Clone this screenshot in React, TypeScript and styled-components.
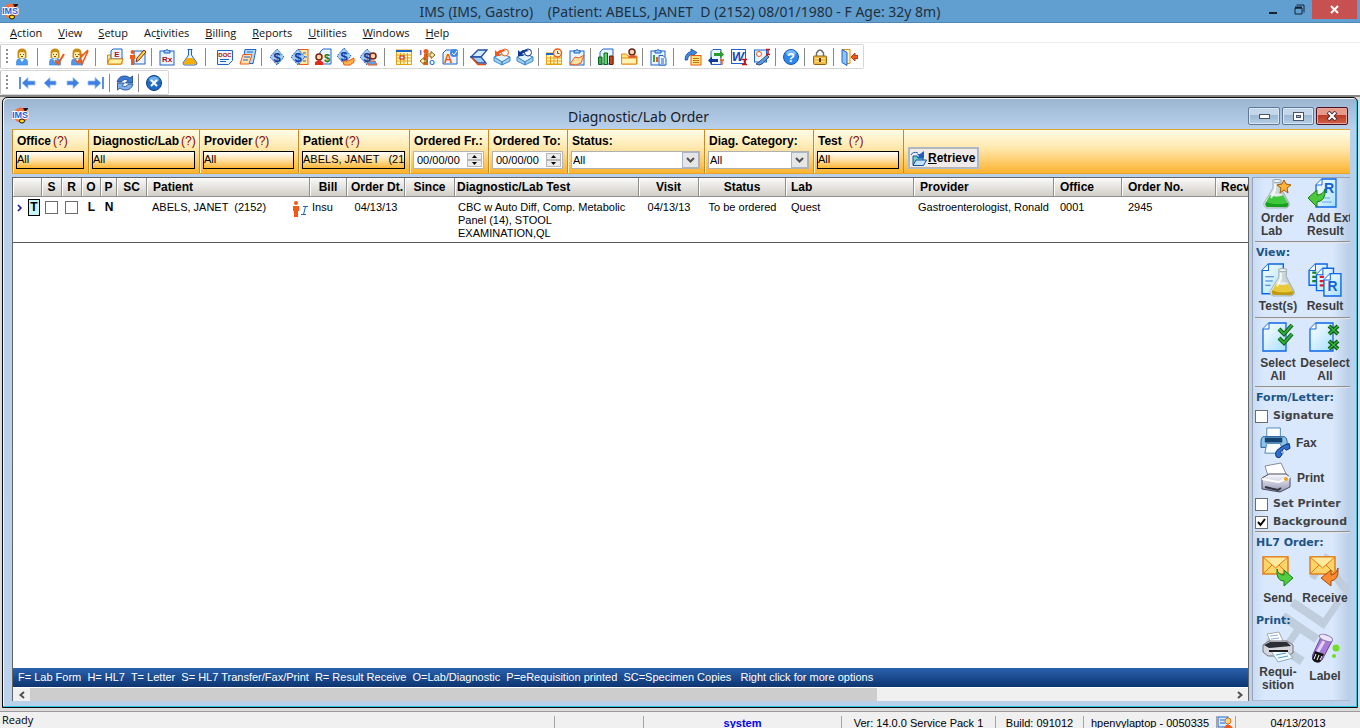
import React from "react";
import styled, { createGlobalStyle } from "styled-components";

const Global = createGlobalStyle`
  *, *::before, *::after { box-sizing: border-box; }
  html, body { margin: 0; height: 100%; }
  #root { height: 100%; }
  body { font-family: "Liberation Sans", Arial, sans-serif; font-size: 11px; color: #000; background: #fff; overflow: hidden; }
  button, input, select { font: inherit; color: inherit; margin: 0; padding: 0; border: 0; border-radius: 0; background: none; }
  svg { display: block; flex: none; }
`;

const uiFont = `"Open Sans", "Segoe UI", sans-serif`;
const titleFont = `"Noto Sans", "Segoe UI", sans-serif`;

/* ---------- application shell ---------- */

const Shell = styled.div`
  display: flex;
  flex-direction: column;
  height: 100vh;
`;

const TitleBar = styled.header`
  display: grid;
  grid-template-columns: 1fr auto 1fr;
  height: 23px;
  background: #629fd1;
  border-bottom: 1px solid #4d88b8;
  flex: none;
`;

const TitleLogo = styled.div`
  padding: 3px 2px;
`;

const AppTitle = styled.h1`
  margin: 0;
  font: 400 14px/23px ${titleFont};
  color: #1f2f3c;
  white-space: pre;
`;

const CaptionButtons = styled.div`
  display: flex;
  justify-content: flex-end;
  padding-right: 3px;
`;

const CaptionButton = styled.button<{ $close?: boolean }>`
  display: flex;
  align-items: center;
  justify-content: center;
  width: ${(p) => (p.$close ? 45 : 26)}px;
  height: 19px;
  background: ${(p) => (p.$close ? "#c75050" : "transparent")};
`;

const MenuBar = styled.nav`
  display: flex;
  gap: 16px;
  height: 20px;
  padding-left: 10px;
  border-bottom: 1px solid #ededed;
  flex: none;
`;

const MenuLink = styled.a`
  font: 400 11px/19px ${uiFont};
  color: #111;
  text-decoration: none;
`;

const ToolBar = styled.div`
  display: flex;
  align-items: center;
  align-self: flex-start;
  height: 25px;
  margin-top: 1px;
  padding: 0 3px 0 5px;
  border: 1px solid #d6d6d6;
  border-left-color: #c0c0c0;
  border-radius: 2px;
  flex: none;
`;

const Grip = styled.span<{ $gap: number }>`
  width: 2px;
  height: 16px;
  margin-right: ${(p) => p.$gap}px;
  background: repeating-linear-gradient(#8c8c8c 0 2px, transparent 2px 4px);
`;

const ToolButton = styled.button`
  display: flex;
  align-items: center;
  justify-content: center;
  width: 23px;
  height: 22px;
`;

const ToolSep = styled.span<{ $wide?: boolean }>`
  width: 1px;
  height: 18px;
  margin: 0 ${(p) => (p.$wide ? "7px 0 4px" : "3px 0 2px")};
  background: #8a8a8a;
`;

const Mdi = styled.main`
  display: flex;
  flex: 1;
  min-height: 0;
  padding: 0 2px 3px;
  background: #dcdcdc;
  border-top: 2px solid #868686;
`;

const ChildWindow = styled.section`
  display: flex;
  flex-direction: column;
  flex: 1;
  min-width: 0;
  padding: 0 7px 6px 9px;
  border: 1px solid #0a0a0a;
  border-radius: 5px 5px 0 0;
  background: linear-gradient(#9ab4d0 0, #b8d0ea 30px, #b9d1eb 100%);
  box-shadow: inset -1px -1px 0 #2cc6e4, inset 1px 1px 0 #f4f8fc;
`;

const WindowHead = styled.div`
  display: flex;
  justify-content: space-between;
  height: 31px;
  flex: none;
`;

const WindowLogo = styled.div`
  padding-top: 9px;
`;

const WindowTitle = styled.h2`
  flex: 1;
  margin: 0;
  padding-top: 8px;
  text-align: center;
  font: 400 14px/22px ${titleFont};
  color: #16202b;
`;

const WindowButtons = styled.div`
  display: flex;
  gap: 2px;
  padding: 9px 2px 0 0;
`;

const WindowButton = styled.button<{ $close?: boolean }>`
  display: flex;
  align-items: center;
  justify-content: center;
  width: 32px;
  height: 18px;
  border: 1px solid ${(p) => (p.$close ? "#4d1020" : "#5f7896")};
  border-radius: 2px;
  box-shadow: inset 0 0 0 1px ${(p) => (p.$close ? "#e6a89c" : "#dae7f5")};
  background: ${(p) =>
    p.$close
      ? "linear-gradient(#e59a8c 0 45%, #bd3a24 45%, #cf5f48)"
      : "linear-gradient(#c3d6ea 0 45%, #9db7d2 45%, #b7cfe7)"};
`;

/* ---------- filter strip ---------- */

const Filters = styled.form`
  display: flex;
  height: 45px;
  flex: none;
  border-top: 1px solid #e0a030;
  border-bottom: 1px solid #e8a52c;
  background: linear-gradient(#fffde8 0, #ffe6a8 45%, #fcb32e 100%);
`;

const FilterCell = styled.div<{ $w: number }>`
  width: ${(p) => p.$w}px;
  padding: 4px 4px 0 3px;
  border-left: 1px solid #c58a2a;
  box-shadow: inset 1px 0 0 #fff3d0;
  flex: none;
`;

const FilterEnd = styled.div`
  flex: 1;
  padding: 17px 0 0 4px;
  border-left: 1px solid #c58a2a;
`;

const FilterLabel = styled.div<{ $gap?: number }>`
  display: flex;
  gap: ${(p) => p.$gap ?? 2}px;
  padding-left: 1px;
  height: 17px;
  font-size: 12px;
  line-height: 15px;
  font-weight: 700;
  white-space: nowrap;
`;

const HelpLink = styled.a`
  font-weight: 400;
  color: #7e0a0a;
  text-decoration: none;
`;

const PlainField = styled.input`
  display: block;
  width: 100%;
  height: 18px;
  padding: 0 0 2px 0;
  border: 1px solid #000;
  background: linear-gradient(#ffffff 0, #ffe0a4 50%, #fdb738 100%);
`;

const DateBox = styled.div`
  display: flex;
  height: 18px;
  padding: 1px;
  border: 1px solid #b5b5b5;
  background: #fff;
`;

const DateInput = styled.input`
  flex: 1;
  min-width: 0;
  padding: 0 0 1px 2px;
`;

const Spinner = styled.div`
  display: flex;
  flex-direction: column;
  width: 15px;
`;

const SpinButton = styled.button`
  display: flex;
  flex: 1;
  align-items: center;
  justify-content: center;
  background: #ececec;
  border: 1px solid #b8b8b8;
`;

const SelectBox = styled.div`
  position: relative;
  height: 18px;
`;

const Select = styled.select`
  appearance: none;
  width: 100%;
  height: 18px;
  padding: 0 20px 1px 1px;
  border: 1px solid #b0b0b0;
  background: #fff;
`;

const SelectArrow = styled.span`
  position: absolute;
  right: 1px;
  top: 1px;
  display: flex;
  align-items: center;
  justify-content: center;
  width: 17px;
  height: 16px;
  border: 1px solid #a8b6c8;
  background: #e6e6e6;
  pointer-events: none;
`;

const RetrieveButton = styled.button`
  display: flex;
  align-items: center;
  gap: 1px;
  height: 22px;
  padding: 0 3px 0 1px;
  border: 1px solid #a8bccb;
  box-shadow: inset 0 0 0 1px #b9b4b2;
  background: #efebea;
  font-size: 12px;
  font-weight: 700;
`;

/* ---------- grid ---------- */

const Body = styled.div`
  display: flex;
  gap: 3px;
  flex: 1;
  min-height: 0;
  padding-top: 3px;
`;

const GridPane = styled.div`
  display: flex;
  flex-direction: column;
  flex: 1;
  min-width: 0;
  border: 1px solid #646464;
  border-bottom: 0;
  background: #fff;
`;

const GridScroll = styled.div`
  flex: 1;
  min-height: 0;
  overflow: hidden;
`;

const Grid = styled.table`
  width: 1280px;
  table-layout: fixed;
  border-collapse: separate;
  border-spacing: 0;
`;

const Th = styled.th<{ $left?: number }>`
  height: 19px;
  padding: 1px 0 0 ${(p) => p.$left ?? 0}px;
  text-align: ${(p) => (p.$left === undefined ? "center" : "left")};
  font-size: 12px;
  line-height: 17px;
  font-weight: 700;
  white-space: nowrap;
  background: linear-gradient(#fafaf9 0, #e6e4e0 50%, #d2cec7 100%);
  border-right: 1px solid #8e8e8e;
  border-bottom: 1px solid #8e8e8e;
  box-shadow: inset 1px 1px 0 #fff;
`;

const Td = styled.td<{ $left?: number; $bold?: boolean }>`
  height: 46px;
  padding: 4px 0 0 ${(p) => p.$left ?? 0}px;
  vertical-align: top;
  text-align: ${(p) => (p.$left === undefined ? "center" : "left")};
  line-height: 13px;
  font-size: ${(p) => (p.$bold ? 12 : 11)}px;
  font-weight: ${(p) => (p.$bold ? 700 : 400)};
  white-space: pre;
  border-bottom: 1px solid #5a5a5a;
`;

const RowMark = styled.div`
  display: flex;
  align-items: center;
  gap: 6px;
  margin-top: -2px;
`;

const TypeTag = styled.span`
  width: 12px;
  height: 17px;
  border: 1px solid #000;
  background: #c6f6f8;
  line-height: 15px;
  text-align: center;
`;

const PatientCell = styled.div`
  display: flex;
  justify-content: space-between;
  padding-right: 2px;
  height: 15px;
`;

const Check = styled.input`
  appearance: none;
  display: block;
  width: 13px;
  height: 13px;
  border: 1px solid #6c6c6c;
  background: #fff;
  flex: none;
`;

const GridCheck = styled(Check)`
  margin: 0 auto 0 3px;
`;

const Legend = styled.div`
  height: 19px;
  padding-left: 5px;
  background: linear-gradient(#2b62ad, #0c3470);
  color: #fff;
  line-height: 19px;
  white-space: pre;
  flex: none;
`;

const ScrollBar = styled.div`
  display: flex;
  height: 14px;
  border-top: 1px solid #fff;
  background: #f0f0f0;
  flex: none;
`;

const ScrollButton = styled.button`
  display: flex;
  align-items: center;
  justify-content: center;
  width: 17px;
`;

const ScrollTrack = styled.div`
  flex: 1;
`;

const ScrollThumb = styled.div`
  width: 70.5%;
  height: 100%;
  background: #cdcdcd;
`;

/* ---------- side panel ---------- */

const Side = styled.aside`
  position: relative;
  width: 98px;
  flex: none;
  overflow: hidden;
  padding-left: 2px;
  border-left: 1px solid #98a2b2;
  border-top: 1px solid #98a2b2;
  border-bottom: 1px solid #b0bccd;
  background: linear-gradient(90deg, #c9dcf3 0, #d9e8fc 12%, #d9e8fc 82%, #b9cde6 100%);
`;

const Watermark = styled.div`
  position: absolute;
  left: 3px;
  bottom: 60px;
  font-size: 60px;
  line-height: 60px;
  font-weight: 700;
  color: #c0cddd;
  transform: rotate(-56deg);
`;

const SideGroup = styled.div<{ $h: number; $line?: boolean }>`
  position: relative;
  height: ${(p) => p.$h}px;
  border-bottom: ${(p) => (p.$line ? "2px groove #e4e4e4" : "0")};
`;

const SideTitle = styled.h3`
  margin: 0;
  padding-left: 1px;
  font: 700 11px/19px "DejaVu Sans", Verdana, sans-serif;
  color: #1c5488;
  white-space: nowrap;
`;

const SidePair = styled.div`
  display: grid;
  grid-template-columns: 46px 48px;
`;

const SideButton = styled.button<{ $align?: "left" }>`
  display: flex;
  flex-direction: column;
  align-items: ${(p) => (p.$align ? "flex-start" : "center")};
  padding-left: ${(p) => (p.$align ? 6 : 0)}px;
  font-size: 12px;
  font-weight: 700;
  line-height: 13px;
  color: #3c3c3c;
  white-space: pre;
  text-align: ${(p) => p.$align ?? "center"};
  gap: 2px;
`;

const SideRowButton = styled.button`
  display: flex;
  align-items: center;
  gap: 5px;
  height: 35px;
  padding-left: 5px;
  font-size: 12px;
  font-weight: 700;
  color: #3c3c3c;
`;

const SideCheck = styled.label`
  display: flex;
  align-items: center;
  gap: 5px;
  height: 18px;
  font: 700 11px/18px "DejaVu Sans", Verdana, sans-serif;
  color: #444;
  white-space: nowrap;
`;

const CheckHolder = styled.span`
  position: relative;
  flex: none;
`;

const CheckMark = styled.svg`
  position: absolute;
  left: 2px;
  top: 2px;
  pointer-events: none;
`;

/* ---------- status bar ---------- */

const StatusBar = styled.footer`
  display: flex;
  height: 17px;
  overflow: hidden;
  flex: none;
  border-top: 1px solid #9a9a9a;
  background: #f0f0f0;
`;

const StatusCell = styled.div<{ $w?: number; $first?: boolean; $strong?: boolean }>`
  ${(p) => (p.$w ? `width: ${p.$w}px; flex: none;` : "flex: 1;")}
  margin-top: ${(p) => (p.$first ? 0 : 4)}px;
  padding-left: ${(p) => (p.$first ? 2 : 0)}px;
  border-left: ${(p) => (p.$first ? "0" : "1px solid #a5a5a5")};
  font: ${(p) => (p.$first ? `400 11px/16px ${uiFont}` : `${p.$strong ? 700 : 400} 11px/14px "Liberation Sans", Arial, sans-serif`)};
  color: ${(p) => (p.$strong ? "#0000f0" : "#000")};
  text-decoration: ${(p) => (p.$strong ? "underline" : "none")};
  text-align: ${(p) => (p.$first ? "left" : "center")};
  white-space: nowrap;
`;

/* ---------- drawings ---------- */

const B = "#1f62c8";
const O = "#f05a14";

const Dollar = ({ x = 9, y = 9 }: { x?: number; y?: number }) => (
  <g>
    <path d={`M${x} ${y - 8}l7 8-7 8-7-8z`} fill="#a4cdf6" stroke={B} strokeDasharray="2 1" />
    <text x={x} y={y + 5} fontSize="13" fontWeight="700" textAnchor="middle" fill="#103c9c">$</text>
  </g>
);

const Head = ({ x = 9, y = 1 }: { x?: number; y?: number }) => (
  <g>
    <path d={`M${x - 5.500} ${y + 16}v-3q0-3 3-3.500h5q3 .5 3 3.500v3z`} fill="#4b9af0" stroke="#3b82d8" strokeWidth=".6" />
    <path d={`M${x - 4.500} ${y + 9}V${y + 4}q0-4.500 4.500-4.500t4.500 4.500v5z`} fill="#c98d14" />
    <rect x={x - 3} y={y + 3} width="6" height="6.500" rx="2" fill="#fdeaa6" />
    <path d={`M${x - 2} ${y + 5.500}h1M${x + 1} ${y + 5.500}h1M${x - 1} ${y + 7.500}h2`} stroke="#7a4a10" />
    <path d={`M${x - 2} ${y + 10}h4l-2 3z`} fill="#fff" />
  </g>
);

const Page = ({ x = 3, y = 1, w = 12, h = 15 }: { x?: number; y?: number; w?: number; h?: number }) => (
  <path d={`M${x + 3} ${y}h${w - 3}v${h}h${-w}v${-(h - 3)}z`} fill="#e9f4ff" stroke={B} />
);

const Clip = () => (
  <g>
    <rect x="2" y="3" width="14" height="14" fill="#e9f4ff" stroke={B} />
    <path d="M6 5V2.500h1.500q1.500-2 3 0H12V5z" fill="#9cc8f4" stroke={B} />
  </g>
);

const Folder = () => (
  <g>
    <path d="M1.500 16V7h5l1.500 2h8v7z" fill="#ffe27a" stroke="#e08a10" />
    <path d="M3.500 11H17l-2 5H1.500z" fill="#fff1a8" stroke="#e08a10" />
  </g>
);

const CalGrid = ({ y = 2 }: { y?: number }) => (
  <g>
    <rect x="1.500" y={y} width="15" height={16.500 - y} fill="#fff8c8" stroke="#e8a010" />
    <path d={`M1 ${y + 1}h16`} stroke={B} strokeWidth="2" />
    <path d={`M5.500 ${y + 3}V16M9 ${y + 3}V16M12.500 ${y + 3}V16M2 ${y + 5}h14M2 ${y + 8}h14M2 ${y + 11}h14`} stroke="#e8a010" />
  </g>
);

const Disk = ({ c }: { c: string }) => (
  <g>
    <path d="M1 9l8-3 8 3-8 5z" fill="#e2f2ff" stroke="#3f88c8" />
    <path d="M1 9v4l8 4v-3zM17 9v4l-8 4v-3z" fill="#9fd0f2" stroke="#3f88c8" />
    <circle cx="12" cy="4.500" r="3.500" fill="#fff" stroke={c} />
    <path d="M2 2v6h6L6 6q3-3 7-3Q8 0 4 4z" fill={c} />
  </g>
);

const icons: Record<string, React.ReactNode> = {
  person: <Head />,
  personCheck: (<g><Head x={7} /><path d="M7 12l3 4 6-10" fill="none" stroke={O} strokeWidth="2" /></g>),
  personChecks: (<g><Head x={6} /><path d="M4 11l3 4 5-9M9 12l2 4 6-13M8 6l3 2 6-6" fill="none" stroke={O} strokeWidth="1.600" /></g>),
  folderE: (<g><Folder /><path d="M7 1h9v10H5V3z" fill="#e9f4ff" stroke={B} /><text x="11" y="9" fontSize="8" fontWeight="700" textAnchor="middle" fill="#b01010">E</text><path d="M3.500 11H17l-2 5H1.500z" fill="#fff1a8" stroke="#e08a10" /></g>),
  note: (<g><rect x="5" y="3" width="11" height="13" fill="#e9f4ff" stroke={B} /><circle cx="3.500" cy="4" r="2" fill={O} /><path d="M1 7h5v4H5v6H2v-6H1z" fill={O} /><path d="M7 14l1-4 7-8 2 2-7 8z" fill="#ffd044" stroke="#8a2a08" /></g>),
  rx: (<g><Clip /><text x="9" y="14" fontSize="8" fontWeight="700" textAnchor="middle" fill="#a01020">Rx</text></g>),
  flask: (<g><path d="M6.500 1.500h5M7.500 2v5l-5.500 8q0 2 2 2h10q2 0 2-2L10.500 7V2" fill="#dff0ff" stroke={B} /><path d="M6 10h6l3.500 5q0 1.500-2 1.500h-9q-2 0-2-1.500z" fill="#f5ad08" /></g>),
  doc: (<g><path d="M1.500 2.500h15v10l-4 4h-11z" fill="#e9f4ff" stroke={B} /><text x="9" y="9" fontSize="6" fontWeight="700" textAnchor="middle" fill="#b01010">DOC</text><path d="M4 11.500h9M4 13.500h6" stroke={B} /></g>),
  pages: (<g><path d="M6 1.500h11l-3 14H4z" fill="#b8dcff" stroke={B} /><path d="M4 6.500h9L10 16H1z" fill="#ffe2b0" stroke={O} /><path d="M8 4h6M5 9h6M4 12h5" stroke={B} /></g>),
  dollar: <Dollar />,
  dollarPage: (<g><rect x="8" y="1.500" width="9" height="15" fill="#ffe6a0" stroke={O} /><path d="M12 5h3M13 9h3M12 13h3" stroke={B} /><Dollar x={7} /></g>),
  dollarPerson: (<g><Page x={6} y={1} w={11} h={15} /><text x="13" y="14" fontSize="11" fontWeight="700" textAnchor="middle" fill="#167a2a">$</text><circle cx="5" cy="9" r="3" fill="#fbd5ae" stroke="#7a2410" strokeWidth="1.500" /><path d="M1 17v-3l4-2 4 2v3z" fill="#e42a1a" /></g>),
  dollarHand: (<g><Dollar x={7} y={8} /><path d="M6 13h5l2-1 4-2v4l-4 3H7z" fill="#ffb24a" stroke={O} /></g>),
  dollarMan: (<g><Dollar x={7} /><circle cx="13" cy="8" r="3" fill="#fbd5ae" stroke="#7a2410" strokeWidth="1.500" /><path d="M8 17l2-4h5l2 4z" fill="#5aa0f0" stroke={O} /></g>),
  calendar: (<g><CalGrid /><rect x="5" y="8" width="4" height="3" fill="#fff" stroke="#c01010" /></g>),
  io: (<g><circle cx="8" cy="3.500" r="2.500" fill={O} /><path d="M6 6h4v11H6z" fill={O} /><path d="M9 6h4V3.500L17 7l-4 3.500V8H9zM9 12H6V9.500L2 13l4 3.500V14h3z" fill="#fff3b0" stroke="#8a5a10" /><text x="2.500" y="7" fontSize="8" fontWeight="700" textAnchor="middle" fill={B}>I</text><text x="14" y="17" fontSize="7" fontWeight="700" textAnchor="middle" fill={B}>O</text></g>),
  pageA: (<g><Page x={2} y={2} w={14} h={14} /><text x="7" y="15" fontSize="12" fontWeight="700" textAnchor="middle" fill={O}>A</text><circle cx="13" cy="5" r="4" fill="#3f88e8" /><path d="M11 5l2 2 3-4" fill="none" stroke="#fff" /></g>),
  book: (<g><path d="M1 9l7-7h9l-6 7z" fill="#d4ebff" stroke="#2350a8" strokeWidth="1.300" /><path d="M1 9h10l5 6H8z" fill="#9fd0fa" stroke="#2350a8" strokeWidth="1.300" /><path d="M2 10l6 6.500h8" fill="none" stroke="#e84a10" strokeWidth="1.500" /></g>),
  diskRed: <Disk c={O} />,
  diskBlue: <Disk c="#0e3796" />,
  calClock: (<g><CalGrid y={5} /><circle cx="12.500" cy="5" r="4" fill="#fff2d0" stroke={O} strokeWidth="1.500" /><path d="M12.500 3v2.500h2" fill="none" stroke="#555" /></g>),
  clipHand: (<g><Clip /><path d="M2 16l5-7 4 1 5-3-3 8-5 2z" fill="#ffe0a0" stroke={O} /></g>),
  chart: (<g><Page x={3} y={1} w={13} h={15} /><path d="M1.500 9h3.500v7.500H1.500z" fill="#38b048" stroke="#126020" /><path d="M7 5h3.500v11.500H7z" fill="#58d868" stroke="#126020" /><path d="M12.500 8H16v8.500h-3.500z" fill="#c04a18" stroke="#701808" /></g>),
  folderMan: (<g><path d="M1.500 16V6h5l1.500 2h9v8z" fill="#ffe27a" stroke="#e08a10" /><circle cx="12" cy="4" r="3" fill="#fbd5ae" stroke="#60281a" strokeWidth="1.500" /><path d="M8 12V9l3-2h3l3 2v3z" fill="#e0553a" /><path d="M1.500 10h15v6h-15z" fill="#fff3b4" stroke="#e08a10" /></g>),
  clipChart: (<g><Clip /><path d="M4 7h2v7H4z" fill="#38a048" /><path d="M7 9h2v5H7z" fill={O} /><path d="M10 7.500h4l3 3v6.500h-7z" fill="#e9f4ff" stroke={B} /><path d="M12 11h3M12 13h3M12 15h3" stroke={B} /></g>),
  phoneNote: (<g><path d="M1 12q0-7 6-8.500V1l6 3.500-5 4V6.500Q4 7 3.500 12z" fill="#3f88e0" stroke="#1848a0" strokeWidth=".8" /><rect x="7" y="7.500" width="10" height="9.500" fill="#ffe27a" stroke={O} /><path d="M9 10.500h6M9 12.500h6M9 14.500h6" stroke="#c07010" /></g>),
  transfer: (<g><path d="M6 1.500h8v15H4v-13z" fill="#e9f4ff" stroke={B} /><path d="M7 5h6V2.500l4 4-4 4V8H7z" fill="#2b9a30" /><path d="M11 11H5V8.500l-4 4 4 4V14h6z" fill="#123a9a" /><path d="M13 12h4M15 12v5" stroke={O} strokeWidth="1.500" /></g>),
  word: (<g><rect x="1.500" y="1.500" width="14" height="14" fill="#fff" stroke={B} /><text x="8" y="13" fontSize="13" fontWeight="700" fontStyle="italic" textAnchor="middle" fill="#1448b8">W</text><path d="M12 11.500h5M14.500 11v6M12 16.500h5" stroke="#c01818" strokeWidth="1.500" /></g>),
  paint: (<g><rect x="1.500" y="2" width="12" height="12" fill="#e9f4ff" stroke={B} /><circle cx="6" cy="6" r="2.500" fill="#fff" stroke={O} /><path d="M6 14l8-7 2 2-7 7q-3 2-6 0z" fill="#5a9ae0" stroke="#38507a" /><path d="M13 1.500h4M15 1v6M13 6.500h4" stroke="#c01818" strokeWidth="1.500" /></g>),
  help: (<g><circle cx="9" cy="9" r="7.500" fill="#2f86ee" stroke="#1658b4" /><ellipse cx="9" cy="5" rx="5" ry="3" fill="#79b8fa" /><text x="9" y="13.500" fontSize="13" fontWeight="700" textAnchor="middle" fill="#fff">?</text></g>),
  lock: (<g><path d="M5.500 8V5q3.500-6 7 0v3" fill="none" stroke="#6f6f6f" strokeWidth="1.500" /><rect x="2.500" y="8" width="13" height="8.500" rx="1" fill="#eebb4c" stroke="#94640c" /><path d="M4 10.500h10M4 13.500h10" stroke="#ffe08a" /><path d="M9 10v4" stroke="#5a3a08" strokeWidth="2" /></g>),
  exit: (<g><path d="M2 1.500h8v14H7" fill="#fff3c0" stroke="#e08a10" /><path d="M2 1.500l5 3v13l-5-3z" fill="#8fc4f8" stroke={B} /><path d="M18 7.500h-3V5l-4 4 4 4v-2.500h3z" fill={O} stroke="#9a2410" strokeWidth=".8" /></g>),
  first: (<g><path d="M2 3v12" stroke="#2a68d8" strokeWidth="1.500" /><path d="M4 9l6-5.500v3.500h7v4h-7v3.500z" fill="#3f7fe4" stroke="#9cc2f6" strokeWidth=".8" /></g>),
  prev: <path d="M3 9l6-5.500v3.500h6v4H9v3.500z" fill="#3f7fe4" stroke="#9cc2f6" strokeWidth=".8" />,
  next: <path d="M15 9L9 3.500v3.500H3v4h6v3.500z" fill="#3f7fe4" stroke="#9cc2f6" strokeWidth=".8" />,
  last: (<g><path d="M16 3v12" stroke="#2a68d8" strokeWidth="1.500" /><path d="M14 9L8 3.500v3.500H1v4h7v3.500z" fill="#3f7fe4" stroke="#9cc2f6" strokeWidth=".8" /></g>),
  refresh: (<g><path d="M1 8Q3 1.500 9 2q3 0 5 2l2.500-2v7H9.500L12 6.500Q8 4 5.500 8z" fill="#3a7ad4" stroke="#123f8c" strokeWidth=".8" /><path d="M17 10q-2 6.500-8 6-3 0-5-2l-2.500 2V9h7L6 11.500q4 2.500 6.500-1.500z" fill="#7db2ec" stroke="#123f8c" strokeWidth=".8" /></g>),
  stop: (<g><circle cx="9" cy="9" r="7.500" fill="#1f6cc4" stroke="#103f80" /><ellipse cx="9" cy="5.500" rx="5" ry="3" fill="#6db0ee" /><path d="M6 6l6 6M12 6l-6 6" stroke="#fff" strokeWidth="2" /></g>),
};

const ToolIcon = ({ name }: { name: string }) => (
  <svg width="18" height="18" viewBox="0 0 18 18" fontFamily="Liberation Sans, sans-serif">{icons[name]}</svg>
);

const Logo = () => (
  <svg width="17" height="17" viewBox="0 0 17 17" fontFamily="Liberation Sans, sans-serif">
    <circle cx="9" cy="8" r="7.500" fill="#f0703e" />
    <path d="M11 1h5v1l-3 3z" fill="#28140c" />
    <text x="8" y="11" fontSize="9" fontWeight="700" textAnchor="middle" fill="#1b5fe0" stroke="#fff" strokeWidth="2" paintOrder="stroke">IMS</text>
    <ellipse cx="10" cy="14" rx="2.500" ry="2" fill="#ffe21c" stroke="#1c1408" />
  </svg>
);

const SideSvg = ({ children, w = 32, h = 32 }: { children: React.ReactNode; w?: number; h?: number }) => (
  <svg width={w} height={h} viewBox="0 0 32 32" fontFamily="Liberation Sans, sans-serif">
    <defs>
      <linearGradient id="paper" x1="0" y1="0" x2="1" y2="1"><stop offset="0" stopColor="#fff" /><stop offset="1" stopColor="#a5e0fc" /></linearGradient>
      <linearGradient id="glass" x1="0" y1="0" x2="1" y2="0"><stop offset="0" stopColor="#f4f8f8" /><stop offset="1" stopColor="#a9bcc0" /></linearGradient>
      <linearGradient id="steel" x1="0" y1="0" x2="0" y2="1"><stop offset="0" stopColor="#fcfcff" /><stop offset="1" stopColor="#9296b4" /></linearGradient>
    </defs>
    {children}
  </svg>
);

const BluePage = ({ x, y, w, h }: { x: number; y: number; w: number; h: number }) => (
  <g>
    <path d={`M${x + 6} ${y}h${w - 6}v${h}h${-w}v${-(h - 6)}z`} fill="url(#paper)" stroke="#0e66e4" strokeWidth="1.300" />
    <path d={`M${x + 6} ${y}v6h-6`} fill="#fff" stroke="#0e66e4" />
  </g>
);

const BigFlask = ({ liquid, dark }: { liquid: string; dark: string }) => (
  <g>
    <path d="M12 2h8v8l8 15q1 4-3 5H6q-4-1-3-5l9-15z" fill="url(#glass)" stroke="#a0b0b4" />
    <path d="M9 17q7 3 13 0l5 9q0 3-3 3H7q-3 0-3-3z" fill={liquid} />
    <path d="M5 24q10 4 22 1 1 4-3 4H7q-3 0-2-5z" fill={dark} />
    <ellipse cx="16" cy="17" rx="6" ry="1.500" fill="#fff" opacity=".5" />
    <ellipse cx="16" cy="3" rx="4.500" ry="1.500" fill="#f8fbfb" stroke="#98a6aa" />
    <path d="M14 6v6l-4 8" stroke="#fff" strokeWidth="2" fill="none" opacity=".8" />
  </g>
);

const Ticks = () => (
  <g fill="none">
    <path d="M17 8l5 5 8-9M17 17l5 5 8-9" stroke="#0c5c14" strokeWidth="4" />
    <path d="M17 8l5 5 8-9M17 17l5 5 8-9" stroke="#2fae38" strokeWidth="2" />
  </g>
);
const Cross = ({ y }: { y: number }) => (
  <g>
    <path d={`M20 ${y}l9 8M29 ${y}l-9 8`} stroke="#0c5c14" strokeWidth="4" />
    <path d={`M20 ${y}l9 8M29 ${y}l-9 8`} stroke="#37b440" strokeWidth="1.600" />
  </g>
);

const Envelope = () => (
  <g>
    <rect x="1" y="2" width="25" height="17" fill="#fdd56a" stroke="#e27a10" strokeWidth="1.400" />
    <path d="M1 19l9-9M26 19l-9-9" stroke="#e27a10" />
    <path d="M1 2l12.500 11L26 2z" fill="#ffe99c" stroke="#e27a10" />
  </g>
);

/* ---------- content ---------- */

const menus: [string, string, string][] = [
  ["", "A", "ction"], ["", "V", "iew"], ["", "S", "etup"], ["Ac", "t", "ivities"], ["", "B", "illing"],
  ["", "R", "eports"], ["", "U", "tilities"], ["", "W", "indows"], ["", "H", "elp"],
];

const mainTools = [
  "person", "||", "personCheck", "personChecks", "||", "folderE", "note", "|", "rx", "flask", "||", "doc", "pages", "|",
  "dollar", "dollarPage", "dollarPerson", "dollarHand", "dollarMan", "||", "calendar", "io", "pageA", "|",
  "book", "diskRed", "diskBlue", "|", "calClock", "clipHand", "|", "chart", "folderMan", "|", "clipChart", "||",
  "phoneNote", "transfer", "word", "paint", "|", "help", "|", "lock", "|", "exit",
];
const navTools = ["first", "prev", "next", "last", "|", "refresh", "|", "stop"];

const Tools = ({ items, gap }: { items: string[]; gap: number }) => (
  <ToolBar role="toolbar">
    <Grip $gap={gap} />
    {items.map((t, i) =>
      t[0] === "|" ? <ToolSep key={i} $wide={t === "||"} /> : (
        <ToolButton key={i} aria-label={t}><ToolIcon name={t} /></ToolButton>
      )
    )}
  </ToolBar>
);

const columns: { w: number; label: string; left?: number }[] = [
  { w: 29, label: "" }, { w: 20, label: "S" }, { w: 20, label: "R" }, { w: 19, label: "O" }, { w: 16, label: "P" },
  { w: 30, label: "SC" }, { w: 163, label: "Patient", left: 6 }, { w: 37, label: "Bill" }, { w: 58, label: "Order Dt.", left: 4 },
  { w: 50, label: "Since" }, { w: 184, label: "Diagnostic/Lab Test", left: 2 }, { w: 60, label: "Visit" },
  { w: 87, label: "Status" }, { w: 128, label: "Lab", left: 5 }, { w: 140, label: "Provider", left: 6 },
  { w: 68, label: "Office", left: 6 }, { w: 94, label: "Order No.", left: 6 }, { w: 77, label: "Recv", left: 5 },
];

const LookupFilter = ({ id, label, value, w, gap }: { id: string; label: string; value: string; w: number; gap?: number }) => (
  <FilterCell $w={w}>
    <FilterLabel $gap={gap}><label htmlFor={id}>{label}</label><HelpLink href="#">(?)</HelpLink></FilterLabel>
    <PlainField id={id} defaultValue={value} />
  </FilterCell>
);

const DateFilter = ({ id, label }: { id: string; label: string }) => (
  <FilterCell $w={79}>
    <FilterLabel as="label" htmlFor={id}>{label}</FilterLabel>
    <DateBox>
      <DateInput id={id} defaultValue="00/00/00" />
      <Spinner>
        <SpinButton type="button" aria-label="Up"><svg width="5" height="3"><path d="M0 3L2.500 0 5 3z" /></svg></SpinButton>
        <SpinButton type="button" aria-label="Down"><svg width="5" height="3"><path d="M0 0h5L2.500 3z" /></svg></SpinButton>
      </Spinner>
    </DateBox>
  </FilterCell>
);

const SelectFilter = ({ id, label, w }: { id: string; label: string; w: number }) => (
  <FilterCell $w={w}>
    <FilterLabel as="label" htmlFor={id}>{label}</FilterLabel>
    <SelectBox>
      <Select id={id}><option>All</option></Select>
      <SelectArrow><svg width="9" height="6"><path d="M1 1l3.500 3.500L8 1" fill="none" stroke="#505050" strokeWidth="2" /></svg></SelectArrow>
    </SelectBox>
  </FilterCell>
);

const SideCheckbox = ({ label, checked }: { label: string; checked?: boolean }) => (
  <SideCheck>
    <CheckHolder>
      <Check type="checkbox" defaultChecked={checked} />
      {checked && <CheckMark width="9" height="9"><path d="M1 4l2.500 3L8 1" fill="none" stroke="#000" strokeWidth="2" /></CheckMark>}
    </CheckHolder>
    {label}
  </SideCheck>
);

export default function App() {
  return (
    <Shell>
      <Global />
      <TitleBar>
        <TitleLogo><Logo /></TitleLogo>
        <AppTitle>{"IMS (IMS, Gastro)    (Patient: ABELS, JANET  D (2152) 08/01/1980 - F Age: 32y 8m)"}</AppTitle>
        <CaptionButtons>
          <CaptionButton aria-label="Minimize"><svg width="10" height="10"><path d="M1 8h8" stroke="#16222e" strokeWidth="2" /></svg></CaptionButton>
          <CaptionButton aria-label="Restore"><svg width="11" height="11"><path d="M2.500 1H10v7.500M1 4h7v6H1z" fill="none" stroke="#16222e" /><path d="M1 3.500h7" stroke="#16222e" strokeWidth="2" /></svg></CaptionButton>
          <CaptionButton $close aria-label="Close"><svg width="9" height="9"><path d="M1 1l7 7M8 1L1 8" stroke="#fff" strokeWidth="2" /></svg></CaptionButton>
        </CaptionButtons>
      </TitleBar>
      <MenuBar>
        {menus.map(([a, b, c]) => <MenuLink key={b + c} href="#">{a}<u>{b}</u>{c}</MenuLink>)}
      </MenuBar>
      <Tools items={mainTools} gap={2} />
      <Tools items={navTools} gap={7} />

      <Mdi>
        <ChildWindow>
          <WindowHead>
            <WindowLogo><Logo /></WindowLogo>
            <WindowTitle>Diagnostic/Lab Order</WindowTitle>
            <WindowButtons>
              <WindowButton aria-label="Minimize window"><svg width="11" height="5"><rect x=".5" y=".5" width="10" height="4" fill="#fff" stroke="#4a5568" /></svg></WindowButton>
              <WindowButton aria-label="Maximize window"><svg width="11" height="9"><rect x=".5" y=".5" width="10" height="8" fill="#fff" stroke="#4a5568" /><rect x="3.500" y="3.500" width="4" height="2" fill="#9db7d2" stroke="#4a5568" /></svg></WindowButton>
              <WindowButton $close aria-label="Close window"><svg width="12" height="10"><path d="M2 1l8 8M10 1L2 9" stroke="#4a3040" strokeWidth="4" /><path d="M2.500 1.500l7 7M9.500 1.500l-7 7" stroke="#fff" strokeWidth="2" /></svg></WindowButton>
            </WindowButtons>
          </WindowHead>

          <Filters onSubmit={(e) => e.preventDefault()}>
            <LookupFilter id="office" label="Office" value="All" w={76} />
            <LookupFilter id="diag" label="Diagnostic/Lab" value="All" w={111} />
            <LookupFilter id="provider" label="Provider" value="All" w={99} />
            <LookupFilter id="patient" label="Patient" value="ABELS, JANET   (2152)" w={111} />
            <DateFilter id="from" label="Ordered Fr.:" />
            <DateFilter id="to" label="Ordered To:" />
            <SelectFilter id="status" label="Status:" w={137} />
            <SelectFilter id="category" label="Diag. Category:" w={109} />
            <LookupFilter id="test" label="Test" value="All" w={90} gap={7} />
            <FilterEnd>
              <RetrieveButton>
                <svg width="17" height="18" viewBox="0 0 17 18"><path d="M3 16V7h4l1 2h5v7z" fill="#6fd0c8" stroke="#14509c" /><path d="M6 11h10.500l-3 5.500H3z" fill="#c4e2f8" stroke="#14509c" /><path d="M1 6q2-4 7-2" fill="none" stroke="#1c5fc0" /><path d="M14 2v7H7l2-2-2-2 3 0z" fill="#1c5fc0" /></svg>
                <span><u>R</u>etrieve</span>
              </RetrieveButton>
            </FilterEnd>
          </Filters>

          <Body>
            <GridPane>
              <GridScroll>
                <Grid>
                  <colgroup>{columns.map((c, i) => <col key={i} style={{ width: c.w }} />)}</colgroup>
                  <thead><tr>{columns.map((c, i) => <Th key={i} $left={c.left}>{c.label}</Th>)}</tr></thead>
                  <tbody>
                    <tr>
                      <Td $left={4} $bold><RowMark><svg width="5" height="8"><path d="M1 1l3 3-3 3" fill="none" stroke="#10108a" strokeWidth="1.500" /></svg><TypeTag>T</TypeTag></RowMark></Td>
                      <Td $left={0}><GridCheck type="checkbox" aria-label="S" /></Td>
                      <Td $left={0}><GridCheck type="checkbox" aria-label="R" /></Td>
                      <Td $bold>L</Td>
                      <Td $bold>N</Td>
                      <Td />
                      <Td $left={5}>
                        <PatientCell>
                          {"ABELS, JANET  (2152)"}
                          <svg width="16" height="16"><circle cx="4" cy="2" r="2" fill={O} /><path d="M1 5h6v5H6v6H2v-6H1z" fill={O} /><path d="M11 5.500h5M13.500 5.500l-2 8M9 13.500h5" stroke={B} fill="none" /></svg>
                        </PatientCell>
                      </Td>
                      <Td $left={2}>Insu</Td>
                      <Td>04/13/13</Td>
                      <Td />
                      <Td $left={3}>{"CBC w Auto Diff, Comp. Metabolic\nPanel (14), STOOL\nEXAMINATION,QL"}</Td>
                      <Td>04/13/13</Td>
                      <Td>To be ordered</Td>
                      <Td $left={5}>Quest</Td>
                      <Td $left={4}>Gastroenterologist, Ronald</Td>
                      <Td $left={6}>0001</Td>
                      <Td $left={6}>2945</Td>
                      <Td />
                    </tr>
                  </tbody>
                </Grid>
              </GridScroll>
              <Legend>{"F= Lab Form  H= HL7  T= Letter  S= HL7 Transfer/Fax/Print  R= Result Receive  O=Lab/Diagnostic  P=eRequisition printed  SC=Specimen Copies   Right click for more options"}</Legend>
              <ScrollBar>
                <ScrollButton aria-label="Scroll left"><svg width="6" height="8"><path d="M5 1L1.500 4 5 7" fill="none" stroke="#505050" strokeWidth="2" /></svg></ScrollButton>
                <ScrollTrack><ScrollThumb /></ScrollTrack>
                <ScrollButton aria-label="Scroll right"><svg width="6" height="8"><path d="M1 1l3.500 3L1 7" fill="none" stroke="#505050" strokeWidth="2" /></svg></ScrollButton>
              </ScrollBar>
            </GridPane>

            <Side>
              <Watermark aria-hidden>HL7</Watermark>
              <SideGroup $h={65} $line>
                <SidePair>
                  <SideButton $align="left">
                    <SideSvg><BigFlask liquid="#3fc83c" dark="#15a020" /><path d="M23 2l2 4 5 1-4 3 1 5-4-3-4 3 1-5-4-3 5-1z" fill="#ffb43a" stroke="#a85a08" /></SideSvg>
                    {"Order\nLab"}
                  </SideButton>
                  <SideButton $align="left">
                    <SideSvg><BluePage x={9} y={1} w={20} h={28} /><text x="22" y="15" fontSize="14" fontWeight="700" textAnchor="middle" fill="#1260d8">R</text><path d="M15 20h8M15 24h10" stroke="#68a8e8" /><path d="M1 20l9-8v5q6 0 8-6 1 12-8 13v5z" fill="#4cc83c" stroke="#187818" /></SideSvg>
                    {"Add Ext\nResult"}
                  </SideButton>
                </SidePair>
              </SideGroup>
              <SideGroup $h={76} $line>
                <SideTitle>View:</SideTitle>
                <SidePair>
                  <SideButton>
                    <SideSvg w={34} h={36}><BluePage x={1} y={1} w={20} h={28} /><path d="M4 13h8M4 17h7M4 21h5" stroke="#3078d8" /><g transform="translate(6 4) scale(.9)"><BigFlask liquid="#e8c93a" dark="#c09a10" /></g></SideSvg>
                    Test(s)
                  </SideButton>
                  <SideButton>
                    <SideSvg w={34} h={36}><BluePage x={1} y={1} w={17} h={20} /><path d="M4 9h4M4 13h4M4 17h4" stroke="#188028" strokeWidth="2" /><BluePage x={8} y={5} w={16} h={21} /><path d="M11 13h4M11 17h4M11 21h4" stroke="#e01830" strokeWidth="2" /><BluePage x={15} y={10} w={16} h={21} /><text x="23" y="26" fontSize="13" fontWeight="700" textAnchor="middle" fill="#1260d8">R</text></SideSvg>
                    Result
                  </SideButton>
                </SidePair>
              </SideGroup>
              <SideGroup $h={69} $line>
                <SidePair>
                  <SideButton>
                    <SideSvg h={36}><BluePage x={1} y={2} w={23} h={28} /><Ticks /></SideSvg>
                    {"Select\nAll"}
                  </SideButton>
                  <SideButton>
                    <SideSvg h={36}><BluePage x={1} y={2} w={23} h={28} /><Cross y={5} /><Cross y={20} /></SideSvg>
                    {"Deselect\nAll"}
                  </SideButton>
                </SidePair>
              </SideGroup>
              <SideGroup $h={145} $line>
                <SideTitle>Form/Letter:</SideTitle>
                <SideCheckbox label="Signature" />
                <SideRowButton>
                  <SideSvg w={31} h={31}><path d="M7 1h14v9H7z" fill="#fff" stroke="#4e86b8" /><path d="M3 10h22q3 1 3 5v6H1v-6q0-4 2-5z" fill="#8cc4ec" stroke="#225a94" /><path d="M5 11h18v5H5z" fill="#16426e" /><path d="M7 17h14l3 10H5z" fill="#f8fbff" stroke="#4e86b8" /><path d="M17 31q-3-5 3-9 5-4 10-5l1 5-4 2-2-2-4 4 2 2-3 4z" fill="#2f6cd0" stroke="#0c2c70" /></SideSvg>
                  Fax
                </SideRowButton>
                <SideRowButton>
                  <SideSvg><path d="M5 4l16-3 6 13H8z" fill="#fff" stroke="#8a8a9c" /><path d="M2 16l7-4h17l4 3v10l-10 5-18-3z" fill="url(#steel)" stroke="#484860" /><path d="M2 17l17 3 11-5" fill="none" stroke="#fff" strokeWidth="2" /><path d="M5 25l13 3 3-2" fill="none" stroke="#343440" strokeWidth="2" /><circle cx="26" cy="17" r="2" fill="#f0a020" /></SideSvg>
                  Print
                </SideRowButton>
                <SideCheckbox label="Set Printer" />
                <SideCheckbox label="Background" checked />
              </SideGroup>
              <SideGroup $h={78}>
                <SideTitle>HL7 Order:</SideTitle>
                <SidePair>
                  <SideButton>
                    <SideSvg h={38}><Envelope /><path d="M15 14q1 6 7 6v-5l9 8-9 8v-5q-8 0-7-12z" fill="#52cc40" stroke="#167c1c" /></SideSvg>
                    Send
                  </SideButton>
                  <SideButton>
                    <SideSvg h={38}><Envelope /><path d="M29 13q1 12-7 13v5l-10-8 10-8v5q5 0 7-7z" fill="#f78c32" stroke="#b04808" /></SideSvg>
                    Receive
                  </SideButton>
                </SidePair>
              </SideGroup>
              <SideGroup $h={84}>
                <SideTitle>Print:</SideTitle>
                <SidePair>
                  <SideButton>
                    <SideSvg h={34}><path d="M5 3l12-2 6 13H10z" fill="#fff" stroke="#a0aab8" /><path d="M8 5l8-1M9 8l8-1" stroke="#90b4d8" /><path d="M1 14l6-4h18l6 4v8l-6 3H6l-5-4z" fill="#d5d6dc" stroke="#70727c" /><path d="M2 14l6-3h17l4 4-22 2z" fill="#2c2e34" /><path d="M9 20h16l6 7-15 4z" fill="#f4faff" stroke="#90a8c0" /><path d="M14 24l10-2M16 27l10-2" stroke="#4898d8" /><path d="M7 20h19" stroke="#202024" strokeWidth="2" /></SideSvg>
                    {"Requi-\nsition"}
                  </SideButton>
                  <SideButton>
                    <SideSvg h={38}><path d="M12 4l11 4-10 19q-4 4-8 0-3-3-1-6z" fill="#a67cd8" stroke="#6c48a0" /><path d="M15 8L7 22" stroke="#e4d4fa" strokeWidth="3" /><ellipse cx="17" cy="5" rx="7" ry="3" transform="rotate(20 17 5)" fill="#ece4f8" stroke="#8c74b0" /><path d="M6 18l9 3-4 8q-5 2-8-3z" fill="#141414" /><path d="M7 21l-2 5M10 22l-2 5M13 23l-2 4" stroke="#fff" /><circle cx="27" cy="15" r="3.500" fill="#74dc28" /><circle cx="25" cy="23" r="2" fill="#74dc28" /></SideSvg>
                    Label
                  </SideButton>
                </SidePair>
              </SideGroup>
            </Side>
          </Body>
        </ChildWindow>
      </Mdi>

      <StatusBar>
        <StatusCell $first>Ready</StatusCell>
        <StatusCell $w={89} />
        <StatusCell $w={198} $strong>system</StatusCell>
        <StatusCell $w={154}>Ver: 14.0.0 Service Pack 1</StatusCell>
        <StatusCell $w={88}>Build: 091012</StatusCell>
        <StatusCell $w={133}>hpenvylaptop - 0050335</StatusCell>
        <StatusCell $w={19}><svg width="16" height="12"><rect x="1" y="1" width="10" height="10" fill="#dcecff" stroke={B} /><path d="M3 4h5M3 7h5" stroke={B} /><circle cx="11" cy="5" r="3" fill="#ffd28a" stroke="#d07a10" /><path d="M7 12l2-3h4l3 3z" fill={O} /></svg></StatusCell>
        <StatusCell $w={125}>04/13/2013</StatusCell>
      </StatusBar>
    </Shell>
  );
}
